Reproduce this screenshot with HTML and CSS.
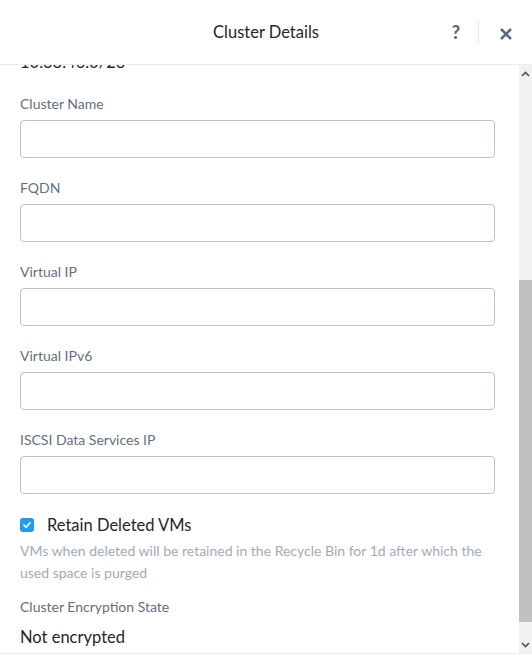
FILE: index.html
```html
<!DOCTYPE html>
<html>
<head>
<meta charset="utf-8">
<link rel="stylesheet" href="styles.css">
</head>
<body>
<div class="modal">
  <header class="head">
    <div class="title">Cluster Details</div>
    <div class="actions">
      <span class="help">?</span>
      <span class="sep"></span>
      <span class="close">
        <svg width="14" height="14" viewBox="0 0 14 14"><path d="M2 2 L12 12 M12 2 L2 12" stroke="#5b6b7f" stroke-width="2.6" stroke-linecap="butt"/></svg>
      </span>
    </div>
  </header>
  <div class="body">
    <div class="content">
      <div class="inner">
        <div class="value clipped">10.33.46.0/23</div>
        <div class="field">
          <label class="label">Cluster Name</label>
          <div class="input"></div>
        </div>
        <div class="field">
          <label class="label">FQDN</label>
          <div class="input"></div>
        </div>
        <div class="field">
          <label class="label">Virtual IP</label>
          <div class="input"></div>
        </div>
        <div class="field">
          <label class="label">Virtual IPv6</label>
          <div class="input"></div>
        </div>
        <div class="field">
          <label class="label">ISCSI Data Services IP</label>
          <div class="input"></div>
        </div>
        <div class="check-row">
          <span class="checkbox">
            <svg width="10" height="10" viewBox="0 0 10 10"><path d="M2 5.2 L4.2 7.3 L8 2.8" fill="none" stroke="#fff" stroke-width="1.7" stroke-linecap="round" stroke-linejoin="round"/></svg>
          </span>
          <span class="check-label">Retain Deleted VMs</span>
        </div>
        <p class="desc">VMs when deleted will be retained in the Recycle Bin for 1d after which the used space is purged</p>
        <div class="label enc">Cluster Encryption State</div>
        <div class="value">Not encrypted</div>
      </div>
    </div>
    <div class="scrollbar">
      <div class="arrow up"><svg width="9" height="6" viewBox="0 0 9 6"><path d="M1 5 L4.5 1.5 L8 5" fill="none" stroke="#505050" stroke-width="1.6"/></svg></div>
      <div class="track"><div class="thumb"></div></div>
      <div class="arrow down"><svg width="9" height="6" viewBox="0 0 9 6"><path d="M1 1 L4.5 4.5 L8 1" fill="none" stroke="#505050" stroke-width="1.6"/></svg></div>
    </div>
  </div>
  <footer class="foot"></footer>
</div>
</body>
</html>
```
FILE: styles.css
```css
* { box-sizing: border-box; }
html, body { margin: 0; padding: 0; background: #fff; }
body {
  font-family: "Lato", "Liberation Sans", sans-serif;
  color: #22272e;
  width: 532px;
  height: 658px;
  overflow: hidden;
}
.modal {
  display: flex;
  flex-direction: column;
  height: 658px;
}
.head {
  height: 65px;
  flex: none;
  border-bottom: 1px solid #ececec;
  position: relative;
  display: flex;
  align-items: center;
  justify-content: center;
}
.title {
  font-size: 16.5px;
  color: #22272e;
  margin-top: -1px;
}
.actions {
  position: absolute;
  right: 0;
  top: 0;
  height: 64px;
  display: flex;
  align-items: center;
}
.help {
  font-size: 18px;
  font-weight: 900;
  color: #5b6b7f;
  width: 20px;
  text-align: center;
  margin-right: 12px;
  margin-top: 0;
}
.sep {
  width: 1px;
  height: 26px;
  background: #ececec;
}
.close {
  width: 53px;
  display: flex;
  justify-content: center;
  padding-top: 3px;
}
.body {
  flex: 1;
  display: flex;
  min-height: 0;
  overflow: hidden;
}
.content {
  flex: 1;
  overflow: hidden;
}
.inner {
  padding: 0 24px 0 20px;
  margin-top: -13px;
}
.value {
  font-size: 16.5px;
  color: #22272e;
  line-height: 20px;
}
.clipped { height: 20px; }
.field {
  margin-top: 24px;
}
.field + .field { margin-top: 22px; }
.label {
  display: block;
  font-size: 14px;
  color: #5f6f82;
  line-height: 16px;
  margin-bottom: 8px;
}
.input {
  height: 38px;
  border: 1px solid #b9c1cb;
  border-radius: 4px;
  background: #fff;
}
.check-row {
  display: flex;
  align-items: center;
  margin-top: 22px;
  height: 18px;
}
.checkbox {
  width: 14px;
  height: 14px;
  border-radius: 3px;
  background: #1c9bf0;
  display: flex;
  align-items: center;
  justify-content: center;
  margin-right: 13px;
}
.check-label {
  font-size: 16.5px;
  color: #22272e;
}
.desc {
  margin: 6px 0 0;
  font-size: 14px;
  line-height: 22px;
  color: #a2abb7;
}
.enc {
  margin-top: 15px;
  margin-bottom: 12px;
}
.scrollbar {
  width: 13px;
  flex: none;
  background: #f1f1f1;
  display: flex;
  flex-direction: column;
}
.arrow {
  height: 17px;
  display: flex;
  align-items: center;
  justify-content: center;
  flex: none;
}
.track {
  flex: 1;
  display: flex;
  flex-direction: column;
  padding-top: 198px;
}
.thumb {
  height: 342px;
  background: #c1c1c1;
}
.foot {
  height: 5px;
  flex: none;
  border-top: 1px solid #ececec;
}
```
